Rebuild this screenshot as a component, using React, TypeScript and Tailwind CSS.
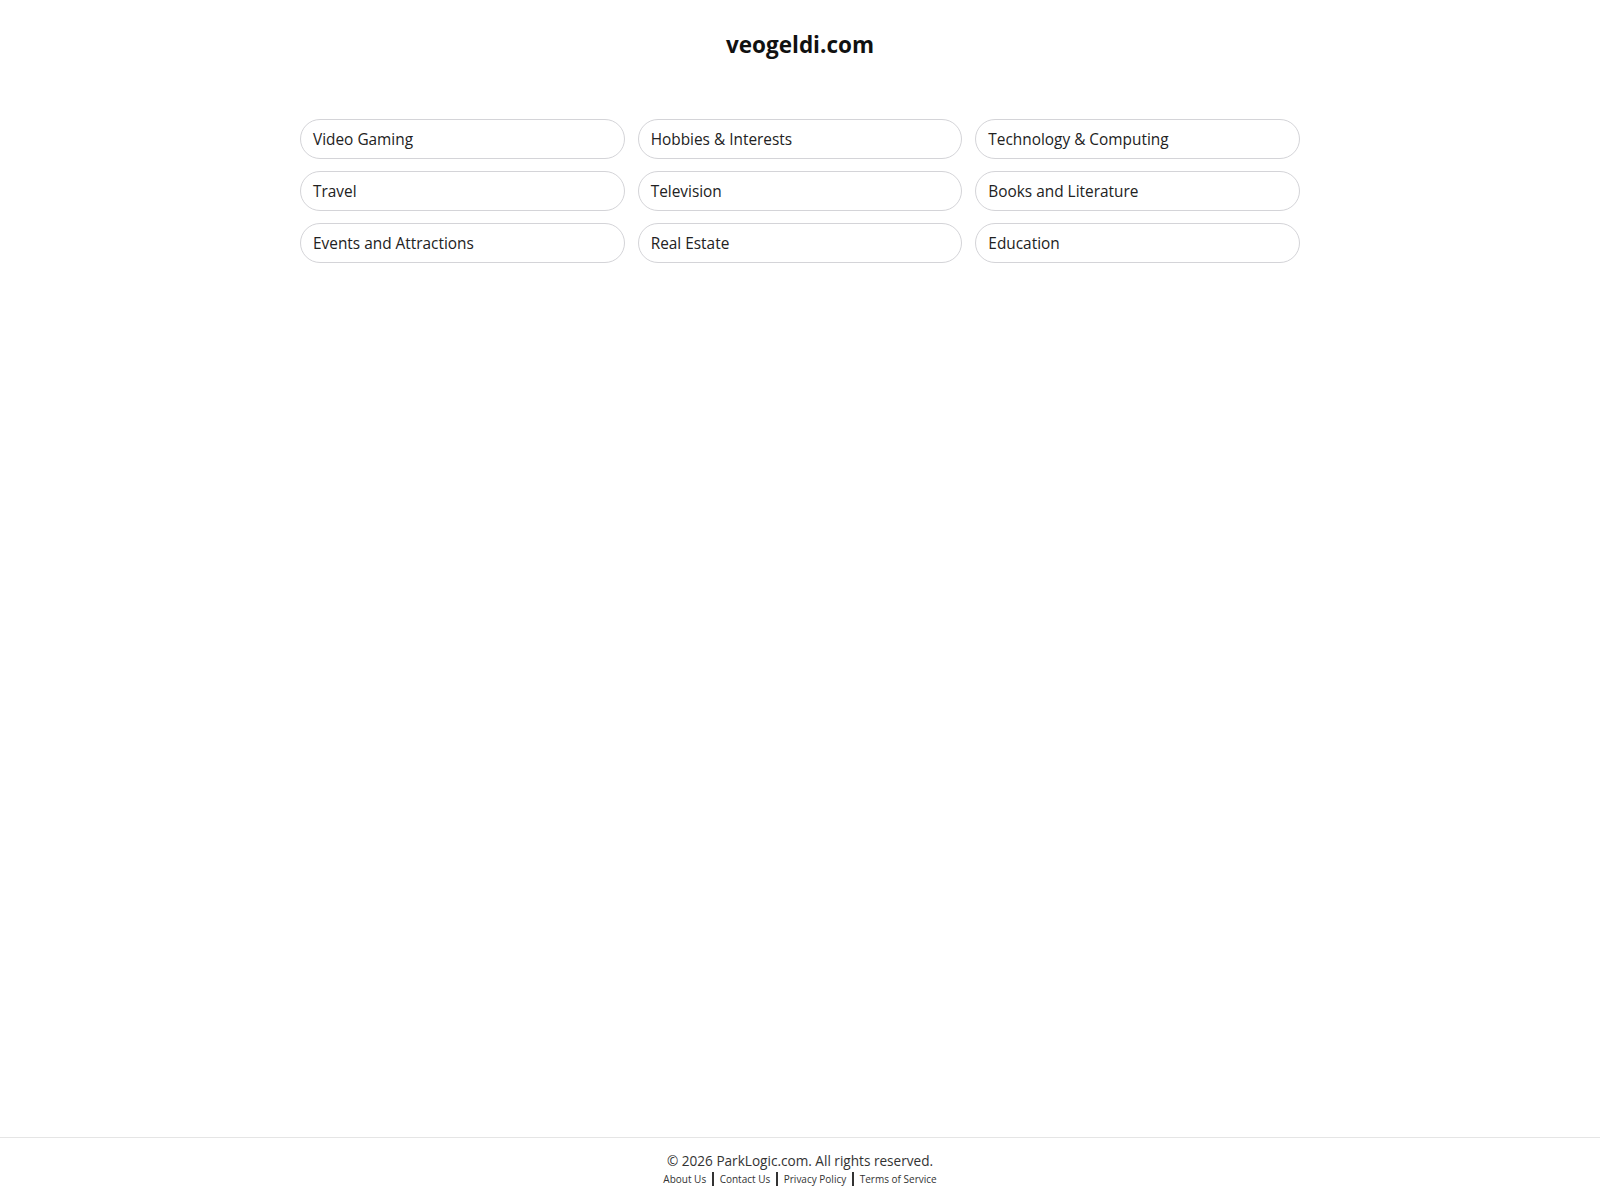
import React from "react";

const items = [
  "Video Gaming",
  "Hobbies & Interests",
  "Technology & Computing",
  "Travel",
  "Television",
  "Books and Literature",
  "Events and Attractions",
  "Real Estate",
  "Education",
];

const links = ["About Us", "Contact Us", "Privacy Policy", "Terms of Service"];

export default function App() {
  return (
    <div
      className="min-h-screen flex flex-col bg-white text-[#222]"
      style={{ fontFamily: '"Open Sans", "Noto Sans", sans-serif' }}
    >
      <main className="flex-1">
        <h1 className="pt-[29px] text-center text-[22.5px] leading-[32px] font-bold text-[#111]">
          veogeldi.com
        </h1>
        <div className="mx-auto mt-[58px] w-[1000px] grid grid-cols-3 gap-x-[13px] gap-y-[12px]">
          {items.map((t) => (
            <a
              key={t}
              href="#"
              className="flex items-center h-[40px] px-[12px] pt-[2px] rounded-full border border-[#d4d4d8] text-[15.4px] text-[#222]"
            >
              {t}
            </a>
          ))}
        </div>
      </main>
      <footer className="border-t border-[#e5e5e5] h-[63px] flex flex-col items-center pt-[13px]">
        <div className="text-[13.6px] leading-[20px] text-[#333]">
          © 2026 ParkLogic.com. All rights reserved.
        </div>
        <div className="flex items-center text-[10px] leading-[14px] text-[#333] mt-[1px]">
          {links.map((l, i) => (
            <React.Fragment key={l}>
              {i > 0 && <span className="mx-[6px] w-[1.5px] h-[14px] bg-[#333]" />}
              <a href="#">{l}</a>
            </React.Fragment>
          ))}
        </div>
      </footer>
    </div>
  );
}
